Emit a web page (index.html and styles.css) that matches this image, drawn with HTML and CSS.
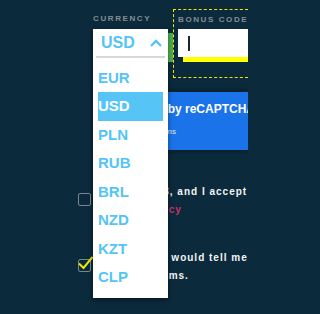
FILE: index.html
```html
<!DOCTYPE html>
<html lang="en">
<head>
<meta charset="utf-8">
<title>Register</title>
<link rel="stylesheet" href="styles.css">
</head>
<body>
<div class="page">
  <div class="form">
    <div class="fields">
      <div class="currency">
        <div class="label">CURRENCY</div>
        <div class="select">
          <div class="dropdown">
            <div class="dd-head">
              <span class="dd-value">USD</span>
              <svg class="caret" width="12" height="8" viewBox="0 0 12 8"><path d="M1 7 L6 2 L11 7" fill="none" stroke="#54c4f6" stroke-width="2.4"/></svg>
            </div>
            <div class="dd-sep"></div>
            <ul class="dd-list">
              <li class="dd-item">EUR</li>
              <li class="dd-item selected">USD</li>
              <li class="dd-item">PLN</li>
              <li class="dd-item">RUB</li>
              <li class="dd-item">BRL</li>
              <li class="dd-item">NZD</li>
              <li class="dd-item">KZT</li>
              <li class="dd-item">CLP</li>
            </ul>
          </div>
        </div>
      </div>
      <div class="bonus">
        <div class="label">BONUS CODE</div>
        <div class="input"><span class="cursor"></span></div>
      </div>
    </div>

    <div class="recaptcha">
      <div class="rc-title">Protected by reCAPTCHA</div>
      <div class="rc-links">Privacy - Terms</div>
    </div>

    <div class="consent first">
      <span class="box"></span>
      <p class="consent-text">I am over 18, and I accept the Terms &amp; Conditions and<br><span class="link">Privacy Policy</span></p>
    </div>

    <div class="consent second">
      <span class="box checked">
        <svg class="check" width="16" height="14" viewBox="0 0 16 14"><path d="M1 7.5 L5.5 12 L14.5 1" fill="none" stroke="#eaea00" stroke-width="2"/></svg>
      </span>
      <p class="consent-text">I agree they would tell me about promotions and<br>offer programs.</p>
    </div>
  </div>
</div>
</body>
</html>
```

FILE: styles.css
```css
html, body {
  margin: 0;
  padding: 0;
}
body {
  background: #0b2a3c;
  font-family: "Liberation Sans", Arial, sans-serif;
}
.page {
  width: 248px;
  height: 314px;
  overflow: hidden;
  position: relative;
}
.form {
  padding: 9px 0 0 78px;
}
.fields {
  display: flex;
  align-items: flex-start;
  margin-left: 15px;
}
.label {
  font-size: 8px;
  line-height: 10px;
  font-weight: bold;
  letter-spacing: 1.6px;
  color: #858e93;
  white-space: nowrap;
  overflow: hidden;
}
.currency {
  flex: none;
  width: 80px;
  padding-top: 5px;
}
.select {
  position: relative;
  margin-top: 9px;
  height: 29px;
  background: #ffffff;
  border-right: 5px solid #4caf50;
}
.dropdown {
  position: absolute;
  top: -4px;
  left: 0;
  width: 74.5px;
  background: #ffffff;
  box-shadow: 0 2px 5px rgba(0, 0, 0, 0.45);
  z-index: 5;
}
.dd-head {
  height: 27px;
  display: flex;
  align-items: center;
  justify-content: space-between;
  padding: 0 6px 0 8px;
}
.dd-value {
  font-size: 16px;
  font-weight: bold;
  color: #54c4f6;
}
.caret {
  display: block;
}
.dd-sep {
  height: 2px;
  margin: 0 3px;
  background: #d8d8d8;
}
.dd-list {
  list-style: none;
  margin: 0;
  padding: 5.5px 4.5px 6px 5px;
}
.dd-item {
  height: 28.57px;
  line-height: 28.57px;
  font-size: 15px;
  font-weight: bold;
  color: #54c4f6;
}
.dd-item.selected {
  background: #56c5f6;
  color: #ffffff;
}
.bonus {
  flex: 1;
  min-width: 0;
  height: 62px;
  border: 1px dashed #f2e600;
  border-right: none;
  padding: 5px 0 0 4px;
}
.input {
  margin-top: 4px;
  height: 28px;
  background: #ffffff;
  box-shadow: 5px 5px 0 #ffff00;
  display: flex;
  align-items: center;
  padding-left: 10px;
}
.cursor {
  width: 1.5px;
  height: 15px;
  background: #1b2733;
}
.recaptcha {
  margin: 14px 0 0 22px;
  height: 58px;
  background: #1a73e8;
  box-shadow: 0 0 6px rgba(0, 0, 0, 0.5);
  box-sizing: border-box;
  padding-top: 10px;
  color: #ffffff;
  overflow: hidden;
}
.rc-title {
  font-size: 12px;
  line-height: 15px;
  font-weight: bold;
  padding-left: 9px;
  white-space: nowrap;
}
.rc-links {
  margin-top: 9.5px;
  font-size: 8px;
  line-height: 10px;
  padding-left: 21px;
  color: #e3ebf7;
  white-space: nowrap;
}
.consent {
  display: flex;
  align-items: flex-start;
  gap: 9px;
}
.consent.first {
  margin-top: 33px;
}
.consent.second {
  margin-top: 31px;
}
.box {
  position: relative;
  flex: none;
  margin-top: 10px;
  width: 13px;
  height: 13px;
  box-sizing: border-box;
  border: 1.5px solid #7b858c;
  border-radius: 2px;
}
.check {
  position: absolute;
  left: -1px;
  top: -4px;
  overflow: visible;
}
.consent-text {
  flex: 1;
  min-width: 0;
  overflow: hidden;
  margin: 0;
  font-size: 10px;
  line-height: 17.5px;
  font-weight: bold;
  letter-spacing: 1px;
  color: #f4f4f4;
  white-space: nowrap;
}
.link {
  color: #c9306b;
}
```
